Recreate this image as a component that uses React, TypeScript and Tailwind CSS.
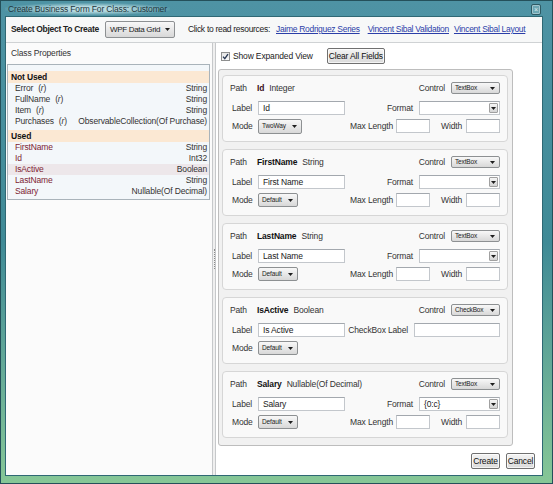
import React from 'react';

type Field = {
  path: string;
  type: string;
  control: string;
  label: string;
  mode: string;
  checkbox?: boolean;
  format?: string;
  pathColor?: string;
};

const fields: Field[] = [
  { path: 'Id', type: 'Integer', control: 'TextBox', label: 'Id', mode: 'TwoWay', pathColor: 'text-[#3a1020]' },
  { path: 'FirstName', type: 'String', control: 'TextBox', label: 'First Name', mode: 'Default' },
  { path: 'LastName', type: 'String', control: 'TextBox', label: 'Last Name', mode: 'Default' },
  { path: 'IsActive', type: 'Boolean', control: 'CheckBox', label: 'Is Active', mode: 'Default', checkbox: true },
  { path: 'Salary', type: 'Nullable(Of Decimal)', control: 'TextBox', label: 'Salary', mode: 'Default', format: '{0:c}' },
];

const notUsed: [string, string][] = [
  ['Error', 'String'],
  ['FullName', 'String'],
  ['Item', 'String'],
  ['Purchases', 'ObservableCollection(Of Purchase)'],
];

const used: [string, string][] = [
  ['FirstName', 'String'],
  ['Id', 'Int32'],
  ['IsActive', 'Boolean'],
  ['LastName', 'String'],
  ['Salary', 'Nullable(Of Decimal)'],
];

function Arrow() {
  return (
    <svg width="5" height="3" viewBox="0 0 5 3" className="shrink-0">
      <path d="M0 0H5L2.5 3Z" fill="#1e1e1e" />
    </svg>
  );
}

function Combo({ text, className }: { text: string; className: string }) {
  return (
    <div
      className={`flex shrink-0 items-center justify-between rounded-[2px] border border-[#8d9092] bg-linear-to-b from-[#f8f8f8] to-[#d8d8d8] pr-[4px] pl-[3px] leading-none text-[#222] ${className}`}
    >
      <span>{text}</span>
      <Arrow />
    </div>
  );
}

function Input({ value = '', className }: { value?: string; className: string }) {
  return (
    <div
      className={`flex shrink-0 items-center border border-[#c3c7cc] border-t-[#a3a8ae] bg-white pl-[4px] leading-none text-[#222] ${className}`}
    >
      {value}
    </div>
  );
}

function FormatCombo({ value = '' }: { value?: string }) {
  return (
    <div className="flex h-[14px] w-[81px] shrink-0 items-stretch border border-[#c3c7cc] border-t-[#a3a8ae] bg-white">
      <div className="flex flex-1 items-center pl-[4px] leading-none text-[#222]">{value}</div>
      <div className="m-[1px] flex w-[9px] items-center justify-center rounded-[1px] border border-[#a0a0a0] bg-linear-to-b from-[#f6f6f6] to-[#d4d4d4]">
        <Arrow />
      </div>
    </div>
  );
}

function Card({ f }: { f: Field }) {
  return (
    <div className="flex h-[67px] shrink-0 flex-col rounded-[4px] border border-[#d6d6d6] bg-[#f9f9f9] pt-[6px] pr-[7px] pl-[7px] text-[#333]">
      <div className="flex h-[12px] items-center">
        <span className="w-[27px]">Path</span>
        <span className={`font-bold ${f.pathColor ?? 'text-[#111]'}`}>{f.path}</span>
        <span className="ml-[5px]">{f.type}</span>
        <span className="ml-auto">Control</span>
        <Combo text={f.control} className="ml-[6px] h-[12px] w-[49px] text-[6.5px]" />
      </div>
      <div className="mt-[7px] flex h-[14px] items-center">
        <span className="ml-[2px] w-[26px]">Label</span>
        <Input value={f.label} className="h-[14px] w-[87px]" />
        {f.checkbox ? (
          <>
            <span className="ml-auto">CheckBox Label</span>
            <Input className="ml-[6px] h-[14px] w-[86px]" />
          </>
        ) : (
          <>
            <span className="ml-auto">Format</span>
            <div className="ml-[6px]">
              <FormatCombo value={f.format} />
            </div>
          </>
        )}
      </div>
      <div className="mt-[4px] flex h-[14px] items-center">
        <span className="ml-[2px] w-[26px]">Mode</span>
        {f.mode === 'TwoWay' ? (
          <Combo text={f.mode} className="h-[15px] w-[44px] text-[6.5px]" />
        ) : (
          <Combo text={f.mode} className="h-[14px] w-[40px] text-[6.5px]" />
        )}
        {!f.checkbox && (
          <>
            <span className="ml-auto">Max Length</span>
            <Input className="ml-[3px] h-[14px] w-[34px]" />
            <span className="ml-[11px]">Width</span>
            <Input className="ml-[4px] h-[14px] w-[34px]" />
          </>
        )}
      </div>
    </div>
  );
}

function ListRow({ name, type, usedItem, hl }: { name: string; type: string; usedItem?: boolean; hl?: boolean }) {
  return (
    <div className={`flex h-[11px] items-center justify-between pr-[2px] pl-[7px] ${hl ? 'bg-[#ede7ea]' : ''}`}>
      <span className={usedItem ? 'text-[#7d2433]' : 'text-[#333]'}>
        {name}
        {!usedItem && (
          <span className="ml-[5px]">
            (<i>r</i>)
          </span>
        )}
      </span>
      <span className="text-[#333]">{type}</span>
    </div>
  );
}

function Button({ children, className }: { children: React.ReactNode; className: string }) {
  return (
    <div
      className={`flex shrink-0 items-center justify-center rounded-[2px] border border-[#707070] bg-linear-to-b from-[#f4f4f4] to-[#dadada] leading-none text-[#111] shadow-[inset_0_0_0_1px_rgba(255,255,255,0.7)] ${className}`}
    >
      {children}
    </div>
  );
}

export default function App() {
  return (
    <div className="flex h-[484px] w-[553px] flex-col border border-[#24505a] bg-linear-to-b from-[#4e93a4] via-[#3f8a96] to-[#86c796] font-['Liberation_Sans',Arial,sans-serif] text-[8.5px] tracking-[-0.15px] whitespace-nowrap">
      {/* Title bar */}
      <div className="flex h-[16px] shrink-0 items-center justify-between pr-[11px] pl-[4px]">
        <span className="rounded-[6px] bg-[radial-gradient(ellipse_at_center,rgba(200,230,234,0.85)_30%,rgba(200,230,234,0)_75%)] px-[3px] py-[2px] leading-none text-[#1d353c]">
          Create Business Form For Class: Customer
        </span>
        <div className="flex h-[11px] w-[10px] items-center justify-center rounded-[2px] border border-[#2d5a64] bg-[#6ea7b3] text-[7px] leading-none text-[#dfeef0] shadow-[inset_0_0_0_1px_rgba(255,255,255,0.35)]">
          ×
        </div>
      </div>

      {/* Client area */}
      <div className="mr-[10px] mb-[8px] ml-[5px] flex flex-1 flex-col bg-white ring-1 ring-[#2f6874]">
        {/* Top band */}
        <div className="flex h-[26px] shrink-0 items-center border-b border-[#cfd2d4] bg-[#f7f8f8] pl-[5px] tracking-[-0.3px] text-[#222]">
          <span className="font-bold">Select Object To Create</span>
          <Combo text="WPF Data Grid" className="ml-[6px] h-[17px] w-[70px] pl-[4px] text-[8px]" />
          <span className="ml-[13px]">Click to read resources:</span>
          <span className="ml-[6px] text-[#2b3ea8] underline">Jaime Rodriguez Series</span>
          <span className="ml-[8px] text-[#2b3ea8] underline">Vincent Sibal Validation</span>
          <span className="ml-[5px] text-[#2b3ea8] underline">Vincent Sibal Layout</span>
        </div>

        <div className="flex flex-1">
          {/* Left pane */}
          <div className="flex w-[206px] shrink-0 flex-col bg-[#fbfbfb]">
            <div className="flex h-[21px] items-center pl-[5px] text-[#333]">Class Properties</div>
            <div className="mr-[2px] ml-[1px] flex h-[136px] flex-col border border-[#a9b3ba] bg-[#f3f7fa] pt-[6px] pb-[2px]">
              <div className="flex h-[12px] items-center bg-[#fbe8d3] pl-[3px] font-bold text-[#111]">Not Used</div>
              {notUsed.map(([n, t]) => (
                <ListRow key={n} name={n} type={t} />
              ))}
              <div className="mt-[3px] flex h-[12px] items-center bg-[#fbe8d3] pl-[3px] font-bold text-[#111]">Used</div>
              {used.map(([n, t]) => (
                <ListRow key={n} name={n} type={t} usedItem hl={n === 'IsActive'} />
              ))}
            </div>
          </div>

          {/* Splitter */}
          <div className="flex w-[4px] shrink-0 items-center justify-center border-r border-l border-[#c6c8ca] bg-[#efefef]">
            <div className="h-[20px] w-0 border-l border-dotted border-[#8a8a8a]" />
          </div>

          {/* Right pane */}
          <div className="flex flex-1 flex-col">
            <div className="flex h-[26px] shrink-0 items-center pl-[5px] text-[#222]">
              <div className="flex h-[9px] w-[9px] items-center justify-center border border-[#8e8f8f] bg-linear-to-b from-[#e6e6e6] to-[#fafafa]">
                <svg width="7" height="7" viewBox="0 0 7 7">
                  <path d="M1 3.6L2.8 5.6L6 1.2" stroke="#2b3a55" strokeWidth="1.4" fill="none" />
                </svg>
              </div>
              <span className="ml-[3px]">Show Expanded View</span>
              <Button className="ml-[14px] h-[16px] w-[58px]">Clear All Fields</Button>
            </div>
            <div className="ml-[2px] flex h-[377px] w-[295px] shrink-0 flex-col gap-[7px] rounded-[3px] border border-[#bdbdbd] bg-[#f1f1f1] pt-[5px] pr-[4px] pl-[3px]">
              {fields.map((f) => (
                <Card key={f.path} f={f} />
              ))}
            </div>
            <div className="mt-[7px] flex justify-end gap-[6px] pr-[7px]">
              <Button className="h-[16px] w-[29px]">Create</Button>
              <Button className="h-[16px] w-[29px]">Cancel</Button>
            </div>
          </div>
        </div>
      </div>
    </div>
  );
}
